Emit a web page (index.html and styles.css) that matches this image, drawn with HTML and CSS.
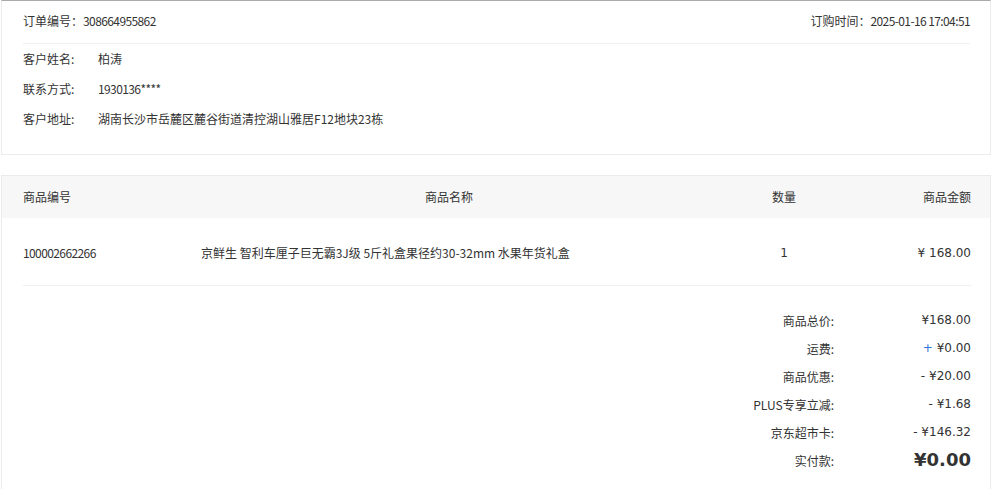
FILE: index.html
```html
<!DOCTYPE html>
<html lang="zh-CN">
<head>
<meta charset="utf-8">
<title>订单详情</title>
<link rel="stylesheet" href="styles.css">
</head>
<body>
<div class="page">
  <section class="card info">
    <div class="info-head">
      <div><span class="lbl">订单编号：</span><span class="mono">308664955862</span></div>
      <div><span class="lbl">订购时间：</span><span class="mono">2025-01-16 17:04:51</span></div>
    </div>
    <div class="info-row"><span class="key">客户姓名:</span><span class="val">柏涛</span></div>
    <div class="info-row"><span class="key">联系方式:</span><span class="val mono">1930136****</span></div>
    <div class="info-row"><span class="key">客户地址:</span><span class="val">湖南长沙市岳麓区麓谷街道清控湖山雅居F12地块23栋</span></div>
  </section>

  <section class="card goods">
    <div class="thead">
      <div class="c1">商品编号</div>
      <div class="c2 center">商品名称</div>
      <div class="c3 center">数量</div>
      <div class="c4 right">商品金额</div>
    </div>
    <div class="trow">
      <div class="c1 mono">100002662266</div>
      <div class="c2">京鲜生 智利车厘子巨无霸3J级 5斤礼盒果径约30-32mm 水果年货礼盒</div>
      <div class="c3 center num">1</div>
      <div class="c4 right num">¥ 168.00</div>
    </div>
    <div class="summary">
      <div class="srow"><span class="skey">商品总价:</span><span class="sval">¥168.00</span></div>
      <div class="srow"><span class="skey">运费:</span><span class="sval"><span class="plus">+</span> ¥0.00</span></div>
      <div class="srow"><span class="skey">商品优惠:</span><span class="sval">- ¥20.00</span></div>
      <div class="srow"><span class="skey">PLUS专享立减:</span><span class="sval">- ¥1.68</span></div>
      <div class="srow"><span class="skey">京东超市卡:</span><span class="sval">- ¥146.32</span></div>
      <div class="srow total"><span class="skey">实付款:</span><span class="sval big">¥0.00</span></div>
    </div>
  </section>
</div>
</body>
</html>
```

FILE: styles.css
```css
* { box-sizing: border-box; }
html, body { margin: 0; padding: 0; background: #fff; }
body {
  font-family: "Noto Sans CJK SC", "DejaVu Sans", sans-serif;
  font-size: 12px;
  color: #333;
}
.page {
  width: 990px;
  margin-left: 1px;
  display: flex;
  flex-direction: column;
  gap: 20px;
}
.card {
  border: 1px solid #ebebeb;
  background: #fff;
}
.info {
  border-top-color: #aaa;
  padding: 0 20px 20px 21px;
  height: 155px;
}
.info-head {
  height: 43px;
  display: flex;
  justify-content: space-between;
  align-items: center;
  border-bottom: 1px solid #f1f1f1;
  padding-bottom: 3px;
}
.info-row {
  height: 30px;
  display: flex;
  align-items: center;
  padding-bottom: 2px;
}
.info-row .key { width: 75px; }
.mono { letter-spacing: -0.6px; }
.goods {
  padding: 0 0 40px;
  min-height: 320px;
}
.thead, .trow {
  display: grid;
  grid-template-columns: 178px 496px 174px 100px;
  padding: 0 19px 0 21px;
  align-items: center;
}
.thead {
  height: 42px;
  background: #f7f7f7;
  padding-bottom: 2px;
}
.trow {
  height: 68px;
  margin: 0 19px 0 21px;
  padding: 2px 0 0;
  border-bottom: 1px solid #f0f0f0;
}
.center { text-align: center; }
.right { text-align: right; }
.num { font-family: "DejaVu Sans", sans-serif; font-size: 12px; }
.summary {
  padding: 20px 19px 0 21px;
  display: flex;
  flex-direction: column;
}
.srow {
  height: 28px;
  display: flex;
  justify-content: flex-end;
  align-items: center;
}
.skey { text-align: right; }
.sval {
  width: 137px;
  text-align: right;
  font-family: "DejaVu Sans", sans-serif;
  font-size: 12px;
}
.plus { color: #2e74d6; }
.big {
  font-size: 18px;
  font-weight: bold;
  line-height: 20px;
}
```
